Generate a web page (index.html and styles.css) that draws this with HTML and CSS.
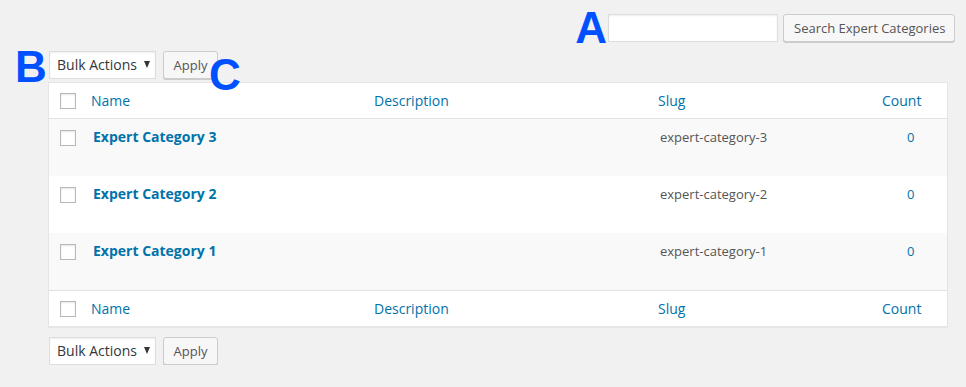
FILE: index.html
```html
<!doctype html>
<html lang="en">
<head>
	<meta charset="UTF-8">
	<title>Expert Categories</title>
	<link rel="stylesheet" href="styles.css">
</head>
<body>
	<div id="wrap">
		<div class="search-box">
			<span class="mark mark-a">A</span>
			<input type="text" class="search-input">
			<span class="button">Search Expert Categories</span>
		</div>

		<div class="tablenav top">
			<span class="mark mark-b">B</span>
			<div class="bulk-select">Bulk Actions <span class="caret"></span></div>
			<span class="button apply">Apply</span>
			<span class="mark mark-c">C</span>
		</div>

		<div class="list-table">
			<div class="row head">
				<div class="cb"><span class="checkbox"></span></div>
				<div class="col-name">Name</div>
				<div class="col-desc">Description</div>
				<div class="col-slug">Slug</div>
				<div class="col-count">Count</div>
			</div>
			<div class="row item alt">
				<div class="cb"><span class="checkbox"></span></div>
				<div class="col-name"><strong>Expert Category 3</strong></div>
				<div class="col-desc"></div>
				<div class="col-slug">expert-category-3</div>
				<div class="col-count"><span class="num">0</span></div>
			</div>
			<div class="row item">
				<div class="cb"><span class="checkbox"></span></div>
				<div class="col-name"><strong>Expert Category 2</strong></div>
				<div class="col-desc"></div>
				<div class="col-slug">expert-category-2</div>
				<div class="col-count"><span class="num">0</span></div>
			</div>
			<div class="row item alt">
				<div class="cb"><span class="checkbox"></span></div>
				<div class="col-name"><strong>Expert Category 1</strong></div>
				<div class="col-desc"></div>
				<div class="col-slug">expert-category-1</div>
				<div class="col-count"><span class="num">0</span></div>
			</div>
			<div class="row head foot">
				<div class="cb"><span class="checkbox"></span></div>
				<div class="col-name">Name</div>
				<div class="col-desc">Description</div>
				<div class="col-slug">Slug</div>
				<div class="col-count">Count</div>
			</div>
		</div>

		<div class="tablenav bottom">
			<div class="bulk-select">Bulk Actions <span class="caret"></span></div>
			<span class="button apply">Apply</span>
		</div>
	</div>
</body>
</html>
```

FILE: styles.css
```css
*{
	margin: 0;
	padding: 0;
	box-sizing: border-box;
}

body{
	background-color: #f1f1f1;
	font-family: "Open Sans", "Liberation Sans", sans-serif;
	font-size: 13px;
	color: #555;
}

#wrap{
	width: 955px;
	padding: 14px 0 0 48px;
}

.search-box{
	position: relative;
	display: flex;
	justify-content: flex-end;
	gap: 5px;
	height: 28px;
}

.search-input{
	width: 170px;
	height: 28px;
	border: 1px solid #ddd;
	background-color: #fff;
	box-shadow: inset 0 1px 2px rgba(0,0,0,.07);
	outline: none;
}

.button{
	display: inline-flex;
	align-items: center;
	height: 28px;
	padding: 0 10px 1px;
	border: 1px solid #ccc;
	border-radius: 3px;
	background-color: #f7f7f7;
	box-shadow: 0 1px 0 #ccc;
	color: #555;
	font-size: 13px;
	white-space: nowrap;
}

.search-box .button{
	width: 172px;
}

.tablenav{
	position: relative;
	display: flex;
	gap: 7px;
	height: 28px;
	margin-top: 9px;
	padding-left: 1px;
}

.tablenav.bottom{
	margin-top: 10px;
}

.bulk-select{
	display: flex;
	align-items: center;
	width: 107px;
	height: 28px;
	padding: 0 0 1px 7px;
	border: 1px solid #ddd;
	background-color: #fff;
	box-shadow: inset 0 1px 2px rgba(0,0,0,.07);
	color: #32373c;
	font-size: 14px;
}

.caret{
	width: 0;
	height: 0;
	margin-left: 7px;
	border-left: 3.5px solid transparent;
	border-right: 3.5px solid transparent;
	border-top: 7px solid #32373c;
}

.apply{
	width: 55px;
	justify-content: center;
	padding: 0 0 1px;
}

.list-table{
	width: 900px;
	margin-top: 3px;
	border: 1px solid #e5e5e5;
	background-color: #fff;
	box-shadow: 0 1px 1px rgba(0,0,0,.04);
}

.row{
	display: grid;
	grid-template-columns: 42px 283px 284px 224px 65px;
}

.head{
	height: 36px;
	align-items: center;
	border-bottom: 1px solid #e1e1e1;
	color: #0073aa;
	font-size: 14px;
}

.head.foot{
	border-bottom: 0;
	border-top: 1px solid #e1e1e1;
	height: 36px;
}

.head .col-count{
	padding-left: 0;
}

.item{
	height: 57px;
	line-height: 20px;
	padding-top: 8px;
	background-color: #fff;
}

.item.alt{
	background-color: #f9f9f9;
}

.cb{
	padding-left: 11px;
}

.checkbox{
	display: block;
	width: 16px;
	height: 16px;
	border: 1px solid #b4b9be;
	background-color: #fff;
	box-shadow: inset 0 1px 2px rgba(0,0,0,.1);
}

.item .cb{
	padding-top: 3px;
}

.item .col-name{
	padding-left: 2px;
}

.item strong{
	color: #0073aa;
	font-size: 14px;
	font-weight: 700;
}

.item .col-slug{
	padding-left: 2px;
}

.item .col-count{
	padding-left: 25px;
	color: #0073aa;
}

.mark{
	position: absolute;
	color: #0050ff;
	font-family: "Liberation Sans", Arial, sans-serif;
	font-weight: 700;
	font-size: 44px;
	line-height: 1;
}

.mark-a{
	right: 348px;
	top: -8px;
}

.mark-b{
	left: -33px;
	top: -6px;
}

.mark-c{
	left: 161px;
	top: 2px;
}
```
